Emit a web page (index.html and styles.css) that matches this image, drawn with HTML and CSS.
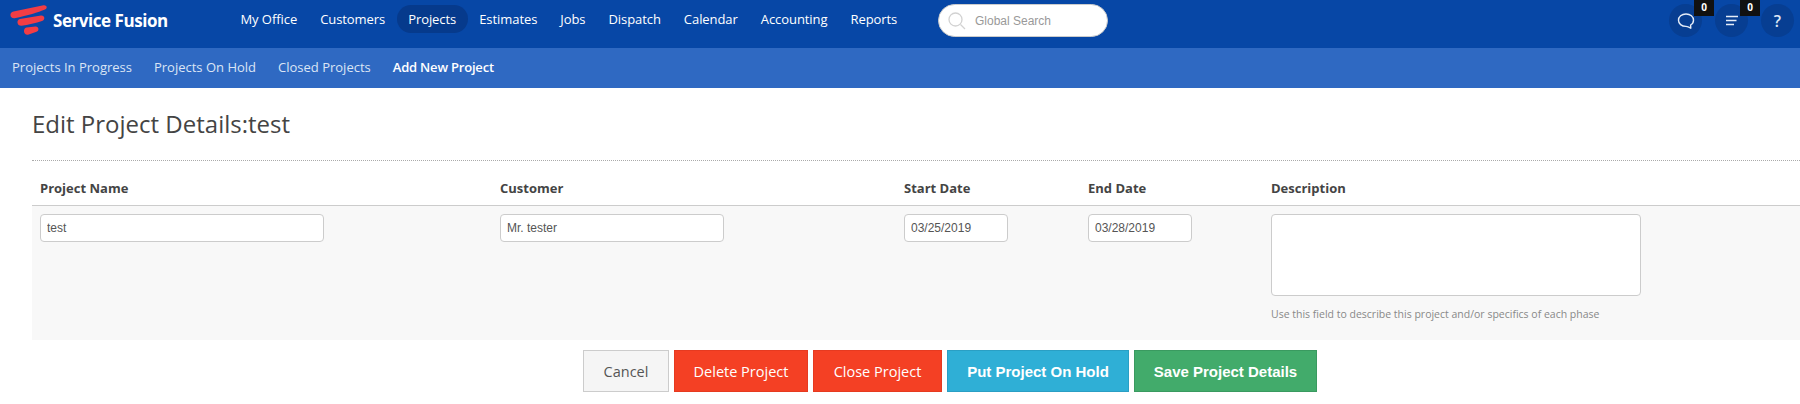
FILE: index.html
```html
<!DOCTYPE html>
<html lang="en">
<head>
<meta charset="utf-8">
<title>Edit Project Details</title>
<link rel="stylesheet" href="styles.css">
</head>
<body>
<header class="topbar">
  <a class="logo">
    <svg class="logo-mark" width="38" height="32" viewBox="0 0 38 32"><g fill="#f23d45"><path d="M3.500 6.500 L33.500 0.300 C36.800 -0.200 38 3.200 35 4.500 C28 7.500 18 10.500 4.500 13.200 C-0.500 13.500 -1 7.500 3.500 6.500 Z"/><path d="M10 14 L31 10.500 C35 10.200 35.500 15 32 16 C26 18 18 20 11.500 20.800 C7 21 6 15 10 14 Z"/><path d="M16.500 22.500 L25.500 21.500 C29 21.300 29.500 26 26.500 26.800 L18 29.800 C13.500 30.500 12.500 23.500 16.500 22.500 Z"/></g></svg>
    <span class="logo-text">Service Fusion</span>
  </a>
  <nav class="mainnav">
    <a class="navitem">My Office</a>
    <a class="navitem">Customers</a>
    <a class="navitem active">Projects</a>
    <a class="navitem">Estimates</a>
    <a class="navitem">Jobs</a>
    <a class="navitem">Dispatch</a>
    <a class="navitem">Calendar</a>
    <a class="navitem">Accounting</a>
    <a class="navitem">Reports</a>
  </nav>
  <div class="search">
    <svg width="18" height="18" viewBox="0 0 18 18" fill="none" stroke="#d2d2d2" stroke-width="1.300"><circle cx="7.500" cy="7.500" r="6.500"/><path d="M12.500 12.500 L17 17"/></svg>
    <span class="search-text">Global Search</span>
  </div>
  <div class="tools">
    <div class="tool">
      <svg width="18" height="18" viewBox="0 0 18 18" fill="none" stroke="#e6edf8" stroke-width="1.400"><path stroke-linejoin="round" d="M9 2C4.600 2 1.500 4.800 1.500 8.300C1.500 11.800 4.600 14.400 9 14.400C10.200 14.400 11.500 14.800 13.800 16.200L13.600 13C15.500 12 16.500 10.300 16.500 8.300C16.500 4.800 13.400 2 9 2Z"/></svg>
      <span class="badge">0</span>
    </div>
    <div class="tool">
      <svg width="14" height="12" viewBox="0 0 14 12" fill="none" stroke="#e6edf8" stroke-width="1.400"><path d="M1 1.500H13M1 5.500H11.500M1 9.500H9"/></svg>
      <span class="badge">0</span>
    </div>
    <div class="tool help">?</div>
  </div>
</header>
<nav class="subnav">
  <a class="subitem">Projects In Progress</a>
  <a class="subitem">Projects On Hold</a>
  <a class="subitem">Closed Projects</a>
  <a class="subitem current">Add New Project</a>
</nav>
<main class="content">
  <h1 class="title">Edit Project Details:test</h1>
  <div class="grid head">
    <div>Project Name</div>
    <div>Customer</div>
    <div>Start Date</div>
    <div>End Date</div>
    <div>Description</div>
  </div>
  <div class="grid body">
    <div><input class="field name" type="text" value="test"></div>
    <div><input class="field customer" type="text" value="Mr. tester"></div>
    <div><input class="field date" type="text" value="03/25/2019"></div>
    <div><input class="field date" type="text" value="03/28/2019"></div>
    <div>
      <textarea class="field desc"></textarea>
      <p class="hint">Use this field to describe this project and/or specifics of each phase</p>
    </div>
  </div>
  <div class="actions">
    <button class="btn cancel">Cancel</button>
    <button class="btn red del">Delete Project</button>
    <button class="btn red close">Close Project</button>
    <button class="btn strong blue">Put Project On Hold</button>
    <button class="btn strong green">Save Project Details</button>
  </div>
</main>
</body>
</html>
```
FILE: styles.css
```css
* { box-sizing: border-box; }
html, body { margin: 0; padding: 0; }
body { width: 1800px; height: 404px; overflow: hidden; background: #fff; font-family: "Open Sans", sans-serif; color: #444; }

.topbar { height: 48px; background: #0747a6; display: flex; align-items: flex-start; }
.logo { display: flex; align-items: center; width: 229px; height: 40px; padding-left: 10px; flex: none; }
.logo-mark { flex: none; margin-top: 2px; }
.logo-text { margin-left: 5px; color: #fff; font-weight: 700; font-size: 17px; letter-spacing: -0.45px; white-space: nowrap; }

.mainnav { display: flex; align-items: center; height: 38px; width: 709px; flex: none; }
.navitem { color: #fff; font-size: 13px; letter-spacing: -0.07px; padding: 0 11.500px; height: 28px; line-height: 28px; border-radius: 14px; white-space: nowrap; }
.navitem.active { background: #063a8c; }

.search { width: 170px; height: 33px; margin-top: 4px; background: #fff; border: 1px solid #ccc; border-radius: 17px; display: flex; align-items: center; padding-left: 9px; flex: none; }
.search-text { font-family: "Liberation Sans", sans-serif; font-size: 12px; color: #999; margin-left: 9px; }

.tools { margin-left: auto; display: flex; gap: 13px; padding: 4px 6px 0 0; }
.tool { width: 33px; height: 33px; border-radius: 50%; background: #073e92; display: flex; align-items: center; justify-content: center; position: relative; }
.help { color: #dfe7f5; font-size: 16px; font-weight: 600; }
.badge { position: absolute; top: -4px; left: 25px; width: 20px; height: 16px; background: #111; color: #fff; font-size: 10px; font-weight: 700; line-height: 15px; text-align: center; }

.subnav { height: 40px; background: #2f69c2; display: flex; align-items: center; gap: 22px; padding: 0 0 3px 12px; }
.subitem { color: #dbe5f5; font-size: 13px; white-space: nowrap; }
.subitem.current { color: #fff; font-weight: 600; letter-spacing: -0.2px; }

.content { padding-left: 32px; }
.title { margin: 0; height: 73px; padding-top: 19px; font-size: 24px; line-height: 33px; font-weight: 400; color: #444; border-bottom: 1px dotted #aaa; }

.grid { display: grid; grid-template-columns: 460px 404px 184px 183px 1fr; padding-left: 8px; }
.head { height: 45px; align-items: center; font-size: 13px; font-weight: 700; color: #444; border-bottom: 1px solid #ccc; padding-top: 10px; }
.body { height: 134px; background: #f8f8f8; padding-top: 8px; }

.field { display: block; margin: 0; padding: 0 6px; height: 28px; background: #fff; border: 1px solid #ccc; border-radius: 4px; font-family: "Liberation Sans", sans-serif; font-size: 12px; color: #555; }
.name { width: 284px; }
.customer { width: 224px; }
.date { width: 104px; }
.desc { width: 370px; height: 82px; resize: none; }
.hint { margin: 10px 0 0; font-size: 10.500px; line-height: 16px; color: #888; }

.actions { display: flex; justify-content: center; gap: 5px; padding: 10px 0 0 68px; height: 52px; }
.btn { height: 42px; padding: 0; border: 1px solid; font-family: "Open Sans", sans-serif; font-size: 14.500px; color: #fff; cursor: pointer; }
.cancel { width: 86px; background: #f5f5f5; border-color: #ccc; color: #555; }
.red { background: #f44024; border-color: #e63a20; }
.del { width: 134px; }
.close { width: 129px; }
.strong { font-family: "Liberation Sans", sans-serif; font-size: 15px; font-weight: 700; width: 182px; }
.blue { background: #2fafd6; border-color: #2a9fc4; }
.green { background: #42ab6b; border-color: #3a9a60; width: 183px; }
```
